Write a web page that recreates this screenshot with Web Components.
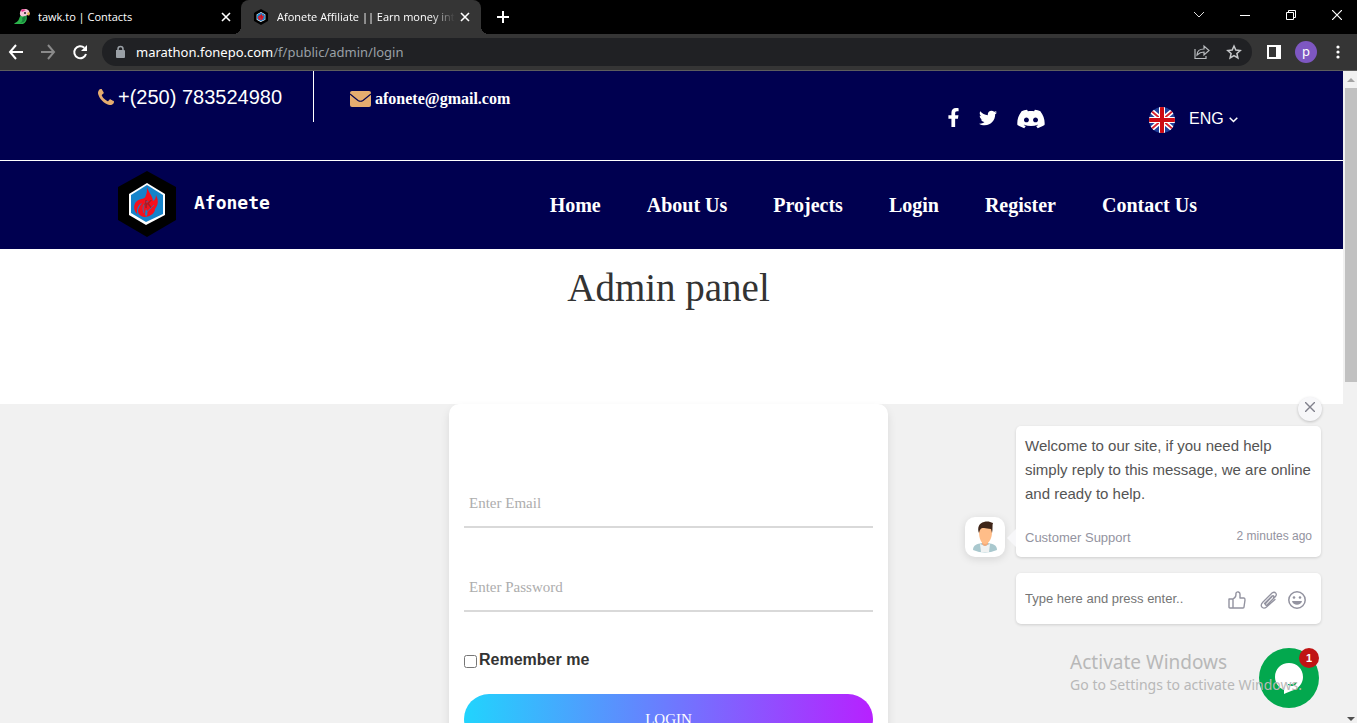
<!DOCTYPE html>
<html lang="en">
<head>
<meta charset="utf-8">
<title>Afonete Affiliate || Earn money</title>
<style>
html, body { margin: 0; height: 100%; }
body { overflow: hidden; font-family: "Liberation Sans", Arial, sans-serif; }
</style>
</head>
<body>
<browser-window>
  <tab-strip slot="chrome"></tab-strip>
  <browser-toolbar slot="chrome"></browser-toolbar>
  <site-page>
    <top-bar></top-bar>
    <site-nav></site-nav>
    <page-title>Admin panel</page-title>
    <login-card></login-card>
  </site-page>
  <chat-widget slot="overlay"></chat-widget>
  <activation-notice slot="overlay"></activation-notice>
</browser-window>

<script>
const define = (name, markup) => {
  const template = document.createElement('template');
  template.innerHTML = `<style>
    :host { display: block; box-sizing: border-box; }
    *, *::before, *::after { box-sizing: border-box; }
    svg { display: block; flex: none; }
    button { border: 0; margin: 0; padding: 0; background: none; color: inherit; font: inherit; display: flex; align-items: center; justify-content: center; flex: none; }
    a { color: inherit; text-decoration: none; }
  </style>` + markup;
  customElements.define(name, class extends HTMLElement {
    constructor() {
      super();
      this.attachShadow({ mode: 'open' }).append(template.content.cloneNode(true));
    }
  });
};

define('browser-window', `<style>
  :host { display: flex; flex-direction: column; height: 100vh; overflow: hidden; background: #f1f1f1; }
  .view { flex: 1; min-height: 0; display: flex; position: relative; }
  .page { flex: 1; min-width: 0; overflow: hidden; }
</style>
<slot name="chrome"></slot>
<div class="view">
  <div class="page"><slot></slot></div>
  <scroll-track></scroll-track>
  <slot name="overlay"></slot>
</div>`);

define('scroll-track', `<style>
  :host { display: flex; flex-direction: column; width: 14px; padding-left: 2px; background: #f1f1f1; align-items: center; }
  .thumb { width: 100%; flex: 290 0 0; background: #c1c1c1; }
  .rest { flex: 328 0 0; }
  .end { height: 17px; display: flex; align-items: center; }
  .end:last-child { height: 8px; }
</style>
<div class="end"><svg width="8" height="4" viewBox="0 0 8 4"><path d="M0 4 4 0l4 4z" fill="#a3a3a3"/></svg></div>
<div class="thumb"></div><div class="rest"></div>
<div class="end"><svg width="8" height="4" viewBox="0 0 8 4"><path d="M0 0h8L4 4z" fill="#505050"/></svg></div>`);

define('hex-logo', `<svg width="100%" height="100%" viewBox="0 0 58 66">
  <path d="M29 0 58 16v33L29 66 0 49V16z" fill="#000"/>
  <path d="m29 12 18 11v21L28 54 11 44V23z" fill="#fff"/>
  <path d="m29 14 16 10v19L28 51 13 42V24z" fill="#1583ca"/>
  <path d="M29 16c1 5 6 9 6 14 2-1 3-3 3-6 3 6 2 10-1 14 0 4-4 7-9 8 2-3 2-5 0-8-1 3-1 5 0 8-4 0-8-2-8-6 0-3 2-5 4-8-3 1-5 5-5 8 0 2 0 3 1 4-5-4-5-11-1-14 4-3 8-1 9-6 1-2 1-5 1-8z" fill="#f5101c"/>
  <path d="M30 30c-5 3-6 7-4 12M36 34c-3 4-7 5-9 10" fill="none" stroke="#1583ca" stroke-width=".8"/>
  <text x="26" y="37" font-family="Liberation Sans" font-size="11" font-weight="700" fill="#a4202b">K</text>
</svg>`);

define('browser-tab', `<style>
  :host { display: flex; align-items: center; gap: 8px; flex: 0 1 241px; min-width: 0; height: 34px; padding: 0 7px 0 14px; color: #fff; font: 11px/16px "Open Sans", sans-serif; position: relative; }
  :host([active]) { flex-basis: 240px; padding-left: 12px; padding-right: 8px; background: #353535; border-radius: 8px 8px 0 0; }
  :host([active])::before, :host([active])::after { content: ""; position: absolute; bottom: 0; width: 8px; height: 8px; }
  :host([active])::before { right: 100%; background: radial-gradient(circle at 0 0, #000 8px, #353535 8px); }
  :host([active])::after { left: 100%; background: radial-gradient(circle at 100% 0, #000 8px, #353535 8px); }
  .name { flex: 1; min-width: 0; overflow: hidden; white-space: nowrap; }
  :host([active]) .name { -webkit-mask-image: linear-gradient(90deg, #000 calc(100% - 24px), transparent); margin-right: -6px; }
  button { width: 16px; height: 16px; }
  ::slotted([slot=icon]) { width: 16px; height: 16px; flex: none; }
</style>
<slot name="icon"></slot><span class="name"><slot></slot></span>
<button aria-label="Close tab"><svg width="10" height="10" viewBox="0 0 10 10"><path d="m1 1 8 8M9 1 1 9" stroke="#fff" stroke-width="1.6"/></svg></button>`);

define('tab-strip', `<style>
  :host { display: flex; background: #000; height: 34px; flex: none; color: #fff; }
  .new { width: 28px; margin-left: 8px; }
  .controls { display: flex; gap: 6px; margin-left: auto; height: 29px; }
  .controls button { width: 40px; }
</style>
<browser-tab>
  <svg slot="icon" width="16" height="16" viewBox="0 0 16 16"><path d="M10 4c4 1 4 9-1 11H0c2-2 4-2 5-5s2-5 5-6z" fill="#2bb34b"/><path d="M8 9c1 2 0 4-2 5l4-1c2-2 2-5 1-7z" fill="#16803a"/><path d="M7 1c3-2 7-1 8 1l1 3-2 1c-3 1-5 2-7 1-2-2-1-4 0-6z" fill="#f3c6d6"/><path d="M7 1c2-1 3-1 5 0L8 3z" fill="#e8308a"/><path d="m14 3 2 1-1 3-2-2z" fill="#e9b44a"/><circle cx="11" cy="4" r="1" fill="#222"/></svg>
  tawk.to | Contacts
</browser-tab>
<browser-tab active><hex-logo slot="icon"></hex-logo>Afonete Affiliate || Earn money into</browser-tab>
<button class="new" aria-label="New tab"><svg width="12" height="12" viewBox="0 0 12 12"><path d="M6 0v12M0 6h12" stroke="#fff" stroke-width="2"/></svg></button>
<div class="controls">
  <button aria-label="Search tabs"><svg width="10" height="6" viewBox="0 0 10 6"><path d="m0 0 5 5 5-5" fill="none" stroke="#ddd"/></svg></button>
  <button aria-label="Minimize"><svg width="10" height="10" viewBox="0 0 10 10"><path d="M0 5.500h10" stroke="#fff"/></svg></button>
  <button aria-label="Restore"><svg width="10" height="10" viewBox="0 0 10 10"><path d="M.5 2.500h7v7h-7zM2.500 2V.5h7v7H8" fill="none" stroke="#fff"/></svg></button>
  <button aria-label="Close"><svg width="10" height="10" viewBox="0 0 10 10"><path d="m0 0 10 10M10 0 0 10" stroke="#fff" stroke-width="1.200"/></svg></button>
</div>`);

define('browser-toolbar', `<style>
  :host { display: flex; align-items: center; height: 37px; flex: none; padding-right: 3px; background: #353535; border-bottom: 1px solid #5d5d5d; color: #fff; }
  button { width: 32px; height: 32px; }
  .box { flex: 1; min-width: 0; height: 28px; margin: 0 6px; padding: 0 2px 0 12px; border-radius: 14px; background: #202124; display: flex; align-items: center; }
  .url { flex: 1; margin-left: 10px; font: 13px/20px "Noto Sans", sans-serif; color: #9aa0a6; white-space: nowrap; overflow: hidden; }
  .url b { font-weight: 400; color: #fff; }
  .user { width: 22px; height: 22px; border-radius: 50%; background: #7e57c2; font: 13px/20px "Noto Sans", sans-serif; display: grid; place-content: center; padding-bottom: 3px; }
</style>
<button aria-label="Back"><svg width="16" height="16" viewBox="0 0 16 16"><path d="M8 1 2 8l6 7M2 8h13" fill="none" stroke="#fff" stroke-width="2"/></svg></button>
<button aria-label="Forward"><svg width="16" height="16" viewBox="0 0 16 16"><path d="m8 1 6 7-6 7M14 8H1" fill="none" stroke="#8a8a8a" stroke-width="2"/></svg></button>
<button aria-label="Reload"><svg width="16" height="16" viewBox="0 0 16 16"><path d="M14 10a6 6 0 1 1-1.700-6.200" fill="none" stroke="#fff" stroke-width="2"/><path d="M15 1v6H9z" fill="#fff"/></svg></button>
<div class="box">
  <svg width="12" height="14" viewBox="0 0 12 14"><path d="M2 5h8a1 1 0 0 1 1 1v6a1 1 0 0 1-1 1H3a1 1 0 0 1-1-1z" fill="#9aa0a6"/><path d="M4 6V4a2.500 2.500 0 0 1 5 0v2" fill="none" stroke="#9aa0a6" stroke-width="1.500"/></svg>
  <div class="url" role="textbox" aria-label="Address" contenteditable="true" spellcheck="false"><b>marathon.fonepo.com</b>/f/public/admin/login</div>
  <button aria-label="Share"><svg width="16" height="16" viewBox="0 0 16 16"><path d="M1 5v9.500h11V12M3 11c0-4 3-6 7-6V2l5 4.500-5 4.500V8c-3 0-5 1-7 3z" fill="none" stroke="#b8bbbe" stroke-width="1.200"/></svg></button>
  <button aria-label="Bookmark"><svg width="16" height="16" viewBox="0 0 16 16"><path d="m8 2 1.800 4.100 4.400.4-3.300 3 1 4.500L8 11.700 4.100 14l1-4.500-3.300-3 4.400-.4z" fill="none" stroke="#c6c8ca" stroke-width="1.500"/></svg></button>
</div>
<button aria-label="Side panel"><svg width="14" height="14" viewBox="0 0 14 14"><path d="M0 0h14v14H0zM2 2v10h7V2z" fill="#fff" fill-rule="evenodd"/></svg></button>
<button aria-label="Profile"><span class="user">p</span></button>
<button aria-label="Menu"><svg width="4" height="14" viewBox="0 0 4 14" fill="#fff"><circle cx="2" cy="2" r="1.600"/><circle cx="2" cy="7" r="1.600"/><circle cx="2" cy="12" r="1.600"/></svg></button>`);

define('site-page', `<style>:host { display: flex; flex-direction: column; min-height: 100%; }</style><slot></slot>`);

define('top-bar', `<style>
  :host { display: flex; justify-content: space-between; height: 90px; background: #000050; border-bottom: 1px solid #fff; color: #fff; padding: 0 105px 0 98px; }
  .contact, .side { display: flex; }
  .contact a { display: flex; align-items: center; height: 51px; gap: 4px; }
  .phone { font-size: 20px; border-right: 1px solid #fff; width: 216px; padding-top: 1px; }
  .mail { margin-left: 36px; font: bold 16px/20px "Liberation Serif", "Times New Roman", serif; padding-top: 4px; }
  .side { align-items: center; padding-top: 8px; }
  .social { display: flex; align-items: center; margin-right: 104px; padding-bottom: 4px; }
  .social a + a { margin-left: 20px; }
  .lang { display: flex; align-items: center; font-size: 16px; }
  select { appearance: none; border: 0; background: none; color: inherit; font: inherit; padding: 0; margin: 0 5px 2px 14px; width: 35px; }
  option { color: #000; }
</style>
<div class="contact">
  <a class="phone" href="tel:+250783524980"><svg width="16" height="16" viewBox="0 0 1408 1408"><path fill="#e5ac6f" d="M1408 1112q0 27-10 70.5T1377 1251q-21 50-122 106-94 51-186 51-27 0-53-3.500t-57.500-12.500-47-14.500T856 1357t-49-18q-98-35-175-83-127-79-264-216T152 776q-48-77-83-175-3-9-18-49t-20.500-55.500-14.500-47-12.500-57.500T0 339q0-92 51-186Q107 52 157 31q25-11 68.500-21T296 0q14 0 21 3 18 6 53 76 11 19 30 54t35 63.500 31 53.500q3 4 17.500 25t21.500 35.500 7 28.500q0 20-28.500 50t-62 55-62 53-28.500 46q0 9 5 22.500t8.500 20.500 14 24 11.500 19q76 137 174 235t235 174q2 1 19 11.500t24 14 20.500 8.500 22.500 5q18 0 46-28.500t53-62 55-62 50-28.500q14 0 28.500 7t35.500 21.500 25 17.500q25 15 53.500 31t63.500 35 54 30q70 35 76 53 3 7 3 21z"/></svg><span>+(250) 783524980</span></a>
  <a class="mail" href="mailto:afonete@gmail.com"><svg width="21" height="16" viewBox="0 0 21 16"><rect width="21" height="16" rx="2" fill="#e5ac6f"/><path d="m0 3 8 6.500q2.500 1.500 5 0L21 3" fill="none" stroke="#000050" stroke-width="1.200"/></svg><span>afonete@gmail.com</span></a>
</div>
<div class="side">
  <div class="social">
    <a href="#" aria-label="Facebook"><svg width="11" height="19" viewBox="30 0 260 512"><path fill="#fff" d="M279.140 288l14.220-92.660h-88.910v-60.130c0-25.350 12.420-50.060 52.240-50.060h40.420V6.260S260.430 0 225.360 0c-73.220 0-121.080 44.380-121.080 124.720v70.620H22.890V288h81.390v224h100.170V288z"/></svg></a>
    <a href="#" aria-label="Twitter"><svg width="18" height="18" viewBox="0 0 512 512"><path fill="#fff" d="M459.370 151.716c.325 4.548.325 9.097.325 13.645 0 138.720-105.583 298.558-298.558 298.558-59.452 0-114.680-17.219-161.137-47.106 8.447.974 16.568 1.299 25.340 1.299 49.055 0 94.213-16.568 130.274-44.832-46.132-.975-84.792-31.188-98.112-72.772 6.498.974 12.995 1.624 19.818 1.624 9.421 0 18.843-1.300 27.614-3.573-48.081-9.747-84.143-51.980-84.143-102.985v-1.299c13.969 7.797 30.214 12.670 47.431 13.319-28.264-18.843-46.781-51.005-46.781-87.391 0-19.492 5.197-37.360 14.294-52.954 51.655 63.675 129.300 105.258 216.365 109.807-1.624-7.797-2.599-15.918-2.599-24.040 0-57.828 46.782-104.934 104.934-104.934 30.213 0 57.502 12.670 76.670 33.137 23.715-4.548 46.456-13.320 66.599-25.340-7.798 24.366-24.366 44.833-46.132 57.827 21.117-2.273 41.584-8.122 60.426-16.243-14.292 20.791-32.161 39.308-52.628 54.253z"/></svg></a>
    <a href="#" aria-label="Discord"><svg width="28" height="24" viewBox="0 -1 24 24"><path fill="#fff" transform="translate(-1.700) scale(1.140 1)" d="M20.317 4.370a19.791 19.791 0 00-4.885-1.515.074.074 0 00-.079.037c-.211.375-.445.865-.608 1.249-1.845-.276-3.680-.276-5.487 0-.164-.393-.406-.874-.618-1.249a.077.077 0 00-.079-.037 19.736 19.736 0 00-4.885 1.515.070.070 0 00-.032.028C.533 9.046-.319 13.580.099 18.058a.082.082 0 00.031.056c2.053 1.508 4.041 2.423 5.993 3.029a.078.078 0 00.084-.028c.462-.630.873-1.295 1.226-1.994a.076.076 0 00-.042-.106c-.653-.248-1.274-.550-1.872-.892a.077.077 0 01-.008-.128c.126-.094.252-.192.372-.291a.074.074 0 01.078-.010c3.928 1.793 8.180 1.793 12.061 0a.074.074 0 01.079.010c.120.099.246.198.373.292a.077.077 0 01-.007.128 12.299 12.299 0 01-1.873.891.077.077 0 00-.041.107c.360.698.772 1.363 1.225 1.993a.076.076 0 00.084.029c1.961-.607 3.950-1.522 6.002-3.029a.077.077 0 00.031-.055c.500-5.177-.838-9.674-3.549-13.660a.061.061 0 00-.031-.029zM8.020 15.331c-1.183 0-2.157-1.086-2.157-2.419 0-1.333.956-2.419 2.157-2.419 1.211 0 2.176 1.095 2.157 2.419 0 1.333-.956 2.419-2.157 2.419zm7.975 0c-1.183 0-2.157-1.086-2.157-2.419 0-1.333.955-2.419 2.157-2.419 1.211 0 2.176 1.095 2.157 2.419 0 1.333-.946 2.419-2.157 2.419z"/></svg></a>
  </div>
  <div class="lang">
    <svg width="26" height="26" viewBox="0 0 26 26"><clipPath id="c"><circle cx="13" cy="13" r="13"/></clipPath><g clip-path="url(#c)"><path fill="#20409a" d="M0 0h26v26H0z"/><path d="m0 2 26 22M0 24 26 2" stroke="#fff" stroke-width="5"/><path d="m0 2 26 22M0 24 26 2" stroke="#d8232f" stroke-width="1.800"/><path d="M13 0v26M0 13h26" stroke="#fff" stroke-width="6"/><path d="M13 0v26M0 13h26" stroke="#cc0b14" stroke-width="4"/></g></svg>
    <select aria-label="Language"><option>ENG</option></select>
    <svg width="9" height="6" viewBox="0 0 9 6"><path d="m.7.7 3.800 3.800L8.300.7" fill="none" stroke="#fff" stroke-width="1.500"/></svg>
  </div>
</div>`);

define('site-nav', `<style>
  :host { display: flex; align-items: center; justify-content: space-between; height: 88px; padding: 0 146px 0 118px; background: #000050; color: #fff; }
  .brand { display: flex; align-items: center; gap: 18px; padding-bottom: 2px; font: bold 18px/24px "DejaVu Sans Mono", monospace; }
  .brand span { padding-bottom: 2px; }
  hex-logo { width: 58px; height: 66px; }
  nav { display: flex; gap: 46px; font: bold 20px/24px "Liberation Serif", "Times New Roman", serif; white-space: nowrap; }
</style>
<a class="brand" href="#"><hex-logo></hex-logo><span>Afonete</span></a>
<nav><a href="#">Home</a><a href="#">About Us</a><a href="#">Projects</a><a href="#">Login</a><a href="#">Register</a><a href="#">Contact Us</a></nav>`);

define('page-title', `<style>
  :host { height: 155px; padding: 17px 6px 0 0; background: #fff; text-align: center; }
  h1 { margin: 0; font: 39px/44px "Liberation Serif", "Times New Roman", serif; color: #333; }
</style><h1><slot></slot></h1>`);

define('login-card', `<style>
  :host { flex: 1; background: #f1f1f1; padding-right: 6px; }
  form { width: 439px; max-width: 100%; margin: 0 auto; padding: 74px 15px 40px; border-radius: 10px; background: #fff; box-shadow: 0 5px 10px rgba(0,0,0,.1); }
  input[type=email], input[type=password] { display: block; width: 100%; height: 50px; border: 0; border-bottom: 2px solid #d9d9d9; padding: 2px 5px 0; background: none; font: 15px/20px "Liberation Serif", "Times New Roman", serif; color: #333; outline: 0; border-radius: 0; }
  input::placeholder { color: #adadad; opacity: 1; }
  input[type=password] { margin-top: 34px; }
  .remember { display: flex; align-items: center; gap: 2px; margin: 36px 0 22px; font: bold 16px/24px "Liberation Sans", Arial, sans-serif; color: #333; }
  .remember input { margin: 3px 0 0; }
  button { width: 100%; height: 50px; border-radius: 25px; color: #fff; font: 15px/20px "Liberation Serif", "Times New Roman", serif; background: linear-gradient(90deg, #21d4fd, #b721ff); }
</style>
<form>
  <input type="email" placeholder="Enter Email" aria-label="Email">
  <input type="password" placeholder="Enter Password" aria-label="Password">
  <div class="remember"><input type="checkbox" id="r"><label for="r">Remember me</label></div>
  <button type="button">LOGIN</button>
</form>`);

define('chat-widget', `<style>
  :host { position: absolute; right: 35px; bottom: 15px; display: flex; flex-direction: column; align-items: flex-end; font-size: 13px; color: #9393a0; }
  .close { width: 24px; height: 24px; border-radius: 50%; background: #f7f7f9; box-shadow: 0 1px 3px rgba(0,0,0,.2); padding-bottom: 4px; margin-bottom: 5px; }
  .row { display: flex; align-items: flex-end; gap: 11px; margin-bottom: 16px; }
  .avatar { width: 40px; height: 40px; border-radius: 10px; background: #fff; box-shadow: 0 2px 8px rgba(0,0,0,.12); display: grid; place-items: center; }
  .bubble, .reply { width: 305px; background: #fff; border-radius: 5px; box-shadow: 0 1px 3px rgba(0,0,0,.15); margin-right: 1px; }
  .bubble { height: 131px; padding: 8px 9px; position: relative; display: flex; flex-direction: column; justify-content: space-between; }
  .bubble::before { content: ""; position: absolute; right: 100%; bottom: 10px; border: 9px solid transparent; border-right-color: #f7f7f9; border-left: 0; }
  p { margin: 0; font-size: 15px; line-height: 24px; color: #545454; white-space: nowrap; }
  .meta { display: flex; justify-content: space-between; line-height: 22px; }
  time { font-size: 12px; line-height: 18px; }
  .reply { height: 51px; display: flex; align-items: center; padding: 0 15px 0 9px; margin-bottom: 24px; }
  .reply input { flex: 1; min-width: 0; border: 0; padding: 0; font: 13px/20px "Liberation Sans", Arial, sans-serif; outline: 0; }
  .reply input::placeholder { color: #757575; }
  .reply button { width: 18px; height: 18px; margin: 2px 0 0 14px; }
  .reply button + button + button { margin-left: 10px; }
  .fab { width: 60px; height: 60px; border-radius: 50%; background: #03a84e; position: relative; margin-right: 3px; }
  .badge { position: absolute; top: 0; right: 0; width: 20px; height: 20px; border-radius: 50%; background: #c01414; color: #fff; font: bold 11px/20px "Liberation Sans", Arial, sans-serif; text-align: center; }
</style>
<button class="close" aria-label="Dismiss"><svg width="10" height="10" viewBox="0 0 10 10"><path d="m0 0 10 10M10 0 0 10" stroke="#80808c" stroke-width="1.400"/></svg></button>
<div class="row">
  <div class="avatar"><svg width="24" height="32" viewBox="0 0 24 32"><path d="M0 29c0-5 4-6 9-7h6c5 1 9 2 9 7q-12 5-24 0z" fill="#a9c8ce"/><path d="m7 23 1 8h8l1-8-5 2z" fill="#f0f2f2"/><path d="M9 19h6v4q-3 4-6 0z" fill="#f5a978"/><path d="M6 11c0-5 3-7 6-7s7 2 7 7c0 6-3 12-7 12S6 17 6 11z" fill="#ffbd88"/><path d="M6 12C4 7 6 2 11 1c4-1 6 0 9 1-1 2 0 6-1 10l-1-4c-3 0-5-1-7-1-4 0-4 2-5 5z" fill="#3e2518"/></svg></div>
  <div class="bubble">
    <p>Welcome to our site, if you need help<br>simply reply to this message, we are online<br>and ready to help.</p>
    <div class="meta"><span>Customer Support</span><time>2 minutes ago</time></div>
  </div>
</div>
<div class="reply">
  <input type="text" placeholder="Type here and press enter.." aria-label="Message">
  <button aria-label="Rate"><svg width="18" height="18" viewBox="0 0 18 18" fill="none" stroke="#9393a0" stroke-width="1.400" stroke-linejoin="round"><path d="M1 8h4v9H2q-1 0-1-1zM5 8c3-2 3-3 3-6 1-2 4-1 4 1v4h4q1 0 1 2l-1 7q0 1-1 1H5"/></svg></button>
  <button aria-label="Attach"><svg width="18" height="18" viewBox="0 0 18 18" fill="none" stroke="#9393a0" stroke-width="1.300" stroke-linecap="round"><path d="m12.500 5-6.500 7c-1.500 2 0 3 1.500 1.500L15 6c3-3 0-6-3-4L3 11c-4 4 0 8 3.500 5L15 8.500M4.500 12.500 12 5c1-1 2.500 0 1.500 1.500"/></svg></button>
  <button aria-label="Emoji"><svg width="18" height="18" viewBox="0 0 18 18"><circle cx="9" cy="9" r="8.200" fill="none" stroke="#9393a0" stroke-width="1.500"/><circle cx="6" cy="6.500" r="1.300" fill="#9393a0"/><circle cx="12" cy="6.500" r="1.300" fill="#9393a0"/><path d="M4 10h10c-1 5-9 5-10 0z" fill="#9393a0"/></svg></button>
</div>
<button class="fab" aria-label="Chat"><svg width="28" height="31" viewBox="0 0 28 31"><path d="M14 0c8 0 14 6 14 14 0 6-4 11-9 13-3 1-6 2-10 4v-4C4 25 0 20 0 14 0 6 6 0 14 0z" fill="#fff"/><path d="M13 21q5 1 9-2-2 6-9 3z" fill="#03a84e"/></svg><span class="badge">1</span></button>`);

define('activation-notice', `<style>
  :host { position: absolute; right: 55px; bottom: 28px; color: #b8b8b8; font-family: "Noto Sans", sans-serif; pointer-events: none; white-space: nowrap; }
  .title { font-size: 19px; line-height: 26px; }
  .hint { font-size: 14px; line-height: 20px; }
</style>
<div class="title">Activate Windows</div><div class="hint">Go to Settings to activate Windows.</div>`);
</script>
</body>
</html>
